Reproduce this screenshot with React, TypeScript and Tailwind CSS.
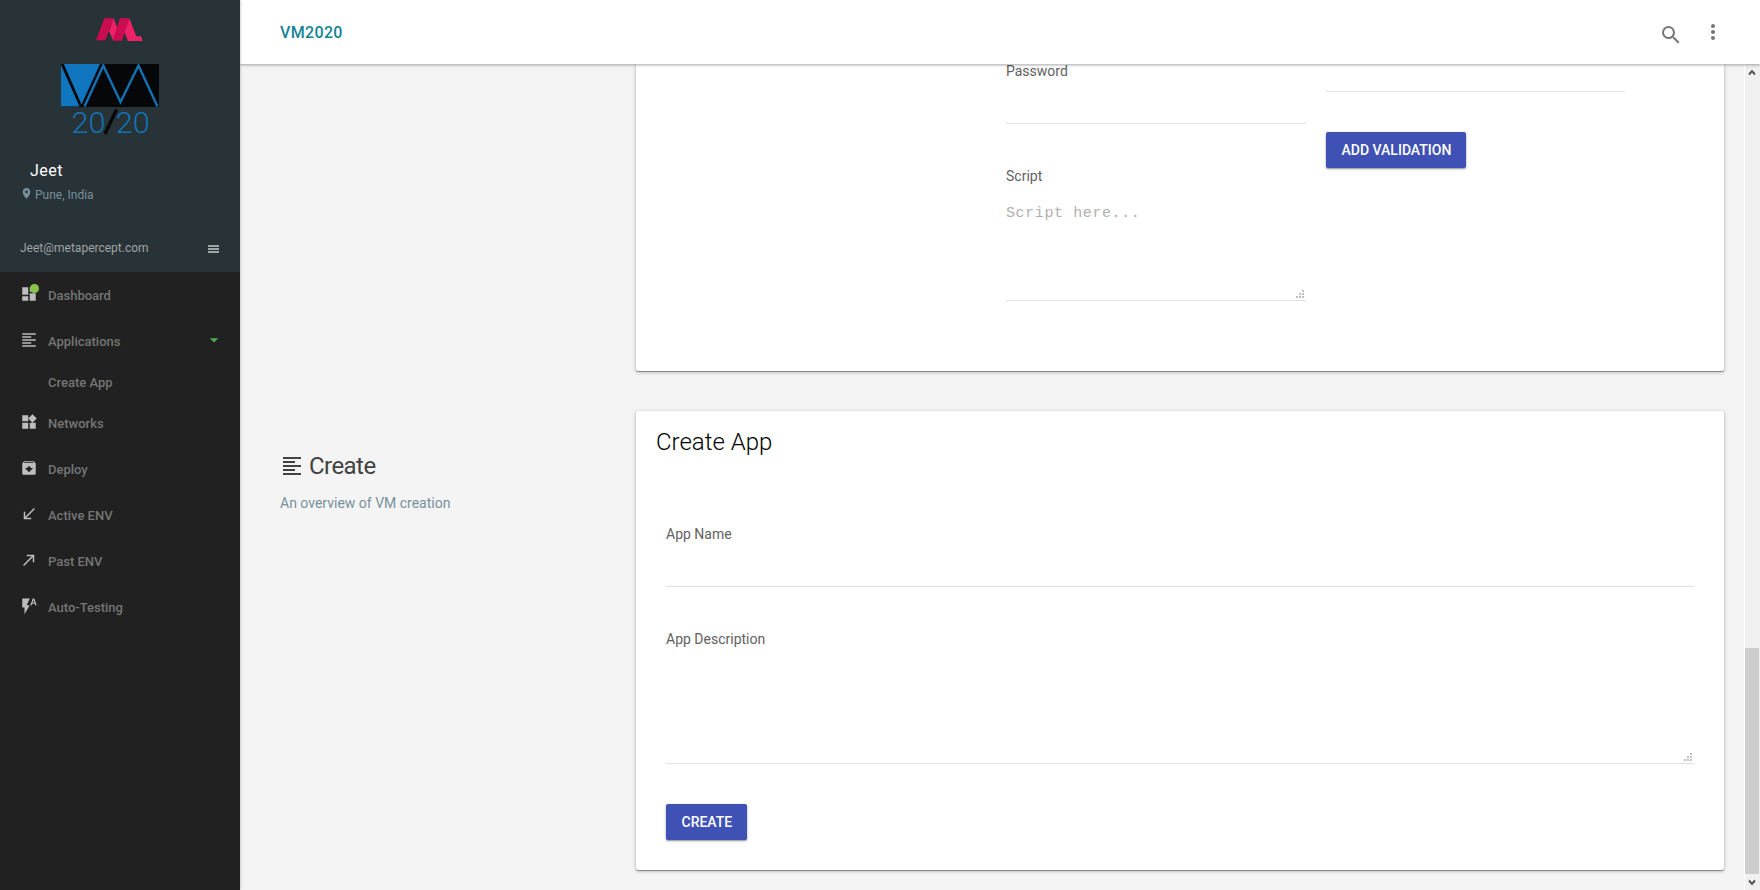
import React from "react";
import {
  MdArchive,
  MdCallMade,
  MdCallReceived,
  MdDashboard,
  MdFlashAuto,
  MdFormatAlignLeft,
  MdArrowDropDown,
  MdMoreVert,
  MdPlace,
  MdSearch,
  MdWidgets,
} from "react-icons/md";
import type { IconType } from "react-icons";

function BrandMark() {
  return (
    <svg width="47" height="24" viewBox="289 53 141 72" className="mr-px block shrink-0">
      <path d="M342 54 L354 86 L341 121 L328 93 Z" fill="#ee2168" />
      <path d="M389 54 L410 108 H424 L429 122 H385 L374 95 Z" fill="#ee2168" />
      <path d="M314 54 H342 L317 120 H289 Z" fill="#cb0c50" />
      <path d="M361 54 H389 L367 121 H339 Z" fill="#cb0c50" />
    </svg>
  );
}

function VmLogo() {
  return (
    <svg width="98" height="80" viewBox="0 0 98 80" className="block shrink-0">
      <rect width="98" height="43" fill="#050708" />
      <path d="M0 1 L18.5 42.5 H0 Z M2.8 0 H39 L20.5 40.5 Z" fill="#1076bf" />
      <path d="M23.5 42.5 L42.3 1.5 L59.5 38 L77.5 1.5 L96.5 42.5" fill="none" stroke="#1272b5" strokeWidth="2.4" />
      <path d="M55.5 45.5 L44 70" stroke="#050708" strokeWidth="3.2" />
      <text x="10.6" y="68.8" fontSize="29" textLength="34" lengthAdjust="spacingAndGlyphs" fontWeight="300" fontFamily="Roboto, sans-serif" fill="#1272b5">20</text>
      <text x="54.8" y="68.8" fontSize="29" textLength="34" lengthAdjust="spacingAndGlyphs" fontWeight="300" fontFamily="Roboto, sans-serif" fill="#1272b5">20</text>
    </svg>
  );
}

function NavItem({ icon: Icon, label, dot, caret }: { icon: IconType; label: string; dot?: boolean; caret?: boolean }) {
  return (
    <li className="flex h-[46px] items-center pl-5 pr-4">
      <span className="relative mb-0.5 mr-2.5 block">
        <Icon size={18} color="#bdbdbd" />
        {dot && <i className="absolute -top-[1px] left-[10px] size-[9px] rounded-full bg-[#8bc34a]" />}
      </span>
      <span className="grow pt-0.5">{label}</span>
      {caret && <MdArrowDropDown size={20} color="#4caf50" className="mb-0.5" />}
    </li>
  );
}

function Grip() {
  return (
    <svg width="8" height="8" viewBox="0 0 8 8" fill="#c0c0c0" className="block" shapeRendering="crispEdges">
      <path d="M6 0h2v2H6zM3 3h2v2H3zM6 3h2v2H6zM0 6h2v2H0zM3 6h2v2H3zM6 6h2v2H6z" />
    </svg>
  );
}

function Field({ label }: { label: string }) {
  return (
    <div className="flex h-[63px] flex-col border-b border-[#e0e0e0]">
      <label className="leading-5">{label}</label>
    </div>
  );
}

function Area({ label, placeholder }: { label: string; placeholder?: string }) {
  return (
    <div className="flex h-[135px] flex-col border-b border-[#e0e0e0]">
      <label className="leading-5">{label}</label>
      <div className="mt-[18px] grow font-['Liberation_Mono','Courier_New',monospace] text-[15px] leading-5 tracking-[0.6px] text-[#b0b0b0]">
        {placeholder}
      </div>
      <div className="flex justify-end pb-0.5 pr-0.5">
        <Grip />
      </div>
    </div>
  );
}

function Button({ children }: { children: React.ReactNode }) {
  return (
    <button className="h-9 self-start rounded-[2px] bg-[#3f51b5] pl-[15.5px] pr-[14.5px] pt-px text-[14px] font-medium uppercase text-white shadow-[0_1px_1.5px_0_rgba(0,0,0,0.26),0_1px_3px_rgba(0,0,0,0.24)]">
      {children}
    </button>
  );
}

const cardShadow = "shadow-[0_1px_1px_0_rgba(0,0,0,0.38),0_1px_4px_0_rgba(0,0,0,0.25)]";

export default function App() {
  return (
    <div className="flex h-[890px] w-[1760px] overflow-hidden bg-[#f4f4f4] font-[Roboto,sans-serif] text-[14px]">
      <aside className="z-20 flex w-60 shrink-0 flex-col bg-[#212121] shadow-[0_0_3px_rgba(0,0,0,0.3)]">
        <div className="flex h-[272px] flex-col bg-[#283338]">
          <div className="flex h-16 shrink-0 items-start justify-center pt-[18px]">
            <BrandMark />
          </div>
          <div className="pl-[61px]">
            <VmLogo />
          </div>
          <div className="mt-[17px] pl-[30px] text-[16px] leading-5 tracking-[0.5px] text-white">Jeet</div>
          <div className="mt-1 flex items-center pl-5 text-[12px] leading-5 text-[#78909c]">
            <MdPlace size={13} className="mb-[3px] mr-0.5" />
            Pune, India
          </div>
          <div className="mt-[33px] flex items-center justify-between pl-5 pr-[21px] text-[12px] leading-5 text-[#a0a4a6]">
            Jeet@metapercept.com
            <svg width="11" height="8" viewBox="0 0 11 8" fill="currentColor" shapeRendering="crispEdges" className="mt-0.5">
              <path d="M0 0h11v2H0zM0 3h11v2H0zM0 6h11v2H0z" />
            </svg>
          </div>
        </div>
        <ul className="text-[13px] font-medium text-[#757575]">
          <NavItem icon={MdDashboard} label="Dashboard" dot />
          <NavItem icon={MdFormatAlignLeft} label="Applications" caret />
          <li className="flex h-9 items-center pl-12 pt-0.5">Create App</li>
          <NavItem icon={MdWidgets} label="Networks" />
          <NavItem icon={MdArchive} label="Deploy" />
          <NavItem icon={MdCallReceived} label="Active ENV" />
          <NavItem icon={MdCallMade} label="Past ENV" />
          <NavItem icon={MdFlashAuto} label="Auto-Testing" />
        </ul>
      </aside>

      <div className="flex grow flex-col">
        <header className="z-10 flex h-16 shrink-0 items-center bg-white pl-10 pr-[35px] shadow-[0_1px_3px_rgba(0,0,0,0.35)]">
          <h1 className="grow pt-0.5 text-[16px] font-medium tracking-[0.35px] text-[#138495]">VM2020</h1>
          <MdSearch size={24} color="#757575" className="mr-[18px] mt-1.5" />
          <MdMoreVert size={24} color="#757575" />
        </header>

        <div className="flex h-[826px]">
          <main className="flex grow flex-col text-[#616161]">
            <section className={`ml-[396px] grid h-[307px] w-[1088px] shrink-0 grid-cols-[300px_299px] gap-x-5 rounded-b-[2px] bg-white pl-[370px] ${cardShadow}`}>
              <div className="-mt-[3px] flex flex-col">
                <Field label="Password" />
                <div className="h-[42px]" />
                <Area label="Script" placeholder="Script here..." />
              </div>
              <div className="flex flex-col">
                <div className="h-7 border-b border-[#e0e0e0]" />
                <div className="h-10" />
                <Button>Add Validation</Button>
              </div>
            </section>

            <div className="mt-10 flex">
              <div className="w-[396px] shrink-0 pl-10 pt-[41px]">
                <h2 className="flex items-center text-[24px] leading-7 tracking-[-0.55px] text-[#424242]">
                  <MdFormatAlignLeft size={24} className="mr-[5px]" />
                  Create
                </h2>
                <p className="mt-[13px] leading-5 text-[#78909c]">An overview of VM creation</p>
              </div>
              <section className={`flex h-[459px] w-[1088px] flex-col rounded-[2px] bg-white px-[30px] ${cardShadow}`}>
                <h3 className="-ml-2.5 pt-[17px] text-[24px] font-light leading-7 text-black">Create App</h3>
                <div className="mt-[68px]">
                  <Field label="App Name" />
                </div>
                <div className="mb-10 mt-[42px]">
                  <Area label="App Description" />
                </div>
                <Button>Create</Button>
              </section>
            </div>
          </main>

          <div className="flex w-4 shrink-0 flex-col border-l border-white bg-[#f0f0f0] pr-px">
            <svg width="15" height="17" viewBox="0 0 15 17" fill="none" stroke="#505050" strokeWidth="2">
              <path d="M4 10.5 L7 7.2 L10 10.5" />
            </svg>
            <div className="grow" />
            <div className="h-[226px] bg-[#cdcdcd]" />
            <svg width="15" height="16" viewBox="0 0 15 16" fill="none" stroke="#505050" strokeWidth="2">
              <path d="M4 6.5 L7 9.8 L10 6.5" />
            </svg>
          </div>
        </div>
      </div>
    </div>
  );
}
